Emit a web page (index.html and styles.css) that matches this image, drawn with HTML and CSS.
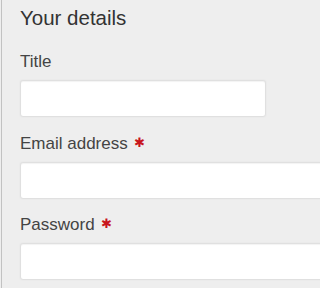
FILE: index.html
```html
<!DOCTYPE html>
<html>
<head>
<meta charset="utf-8">
<link rel="stylesheet" href="styles.css">
</head>
<body>
<div class="panel">
  <h2 class="heading">Your details</h2>
  <div class="field">
    <label class="label" for="title">Title</label>
    <input class="input input-short" id="title" type="text">
  </div>
  <div class="field">
    <label class="label" for="email">Email address <span class="req">&#x2731;</span></label>
    <input class="input input-long" id="email" type="text">
  </div>
  <div class="field">
    <label class="label" for="password">Password <span class="req">&#x2731;</span></label>
    <input class="input input-long" id="password" type="password">
  </div>
</div>
</body>
</html>
```

FILE: styles.css
```css
html, body {
  margin: 0;
  padding: 0;
  background: #eeeeee;
  height: 100%;
  overflow: hidden;
}
body {
  font-family: "Liberation Sans", Arial, sans-serif;
  color: #3a3a3a;
}
.panel {
  margin-left: 1px;
  border-left: 1px solid #c2c2c2;
  padding-left: 18px;
  height: 100%;
  box-sizing: border-box;
  padding-top: 6px;
  overflow: hidden;
}
.heading {
  margin: 0;
  font-size: 20.5px;
  line-height: 24px;
  font-weight: normal;
  color: #333;
}
.field {
  display: flex;
  flex-direction: column;
  align-items: flex-start;
}
.heading + .field {
  margin-top: 22px;
}
.field + .field {
  margin-top: 15.5px;
}
.label {
  font-size: 17px;
  line-height: 20px;
  color: #444;
  margin-bottom: 8px;
}
.req {
  color: #c8161d;
  font-size: 12.5px;
  vertical-align: 2px;
  margin-left: 2px;
}
.input {
  box-sizing: border-box;
  height: 37px;
  background: #fff;
  border: 1px solid #e0e0e0;
  border-radius: 3px;
  box-shadow: inset 0 1px 1px rgba(0,0,0,0.05), 0 0 2px rgba(0,0,0,0.06);
  margin: 0;
  padding: 0 8px;
  outline: none;
}
.input-short {
  width: 246px;
}
.input-long {
  width: 600px;
  flex-shrink: 0;
}
```
